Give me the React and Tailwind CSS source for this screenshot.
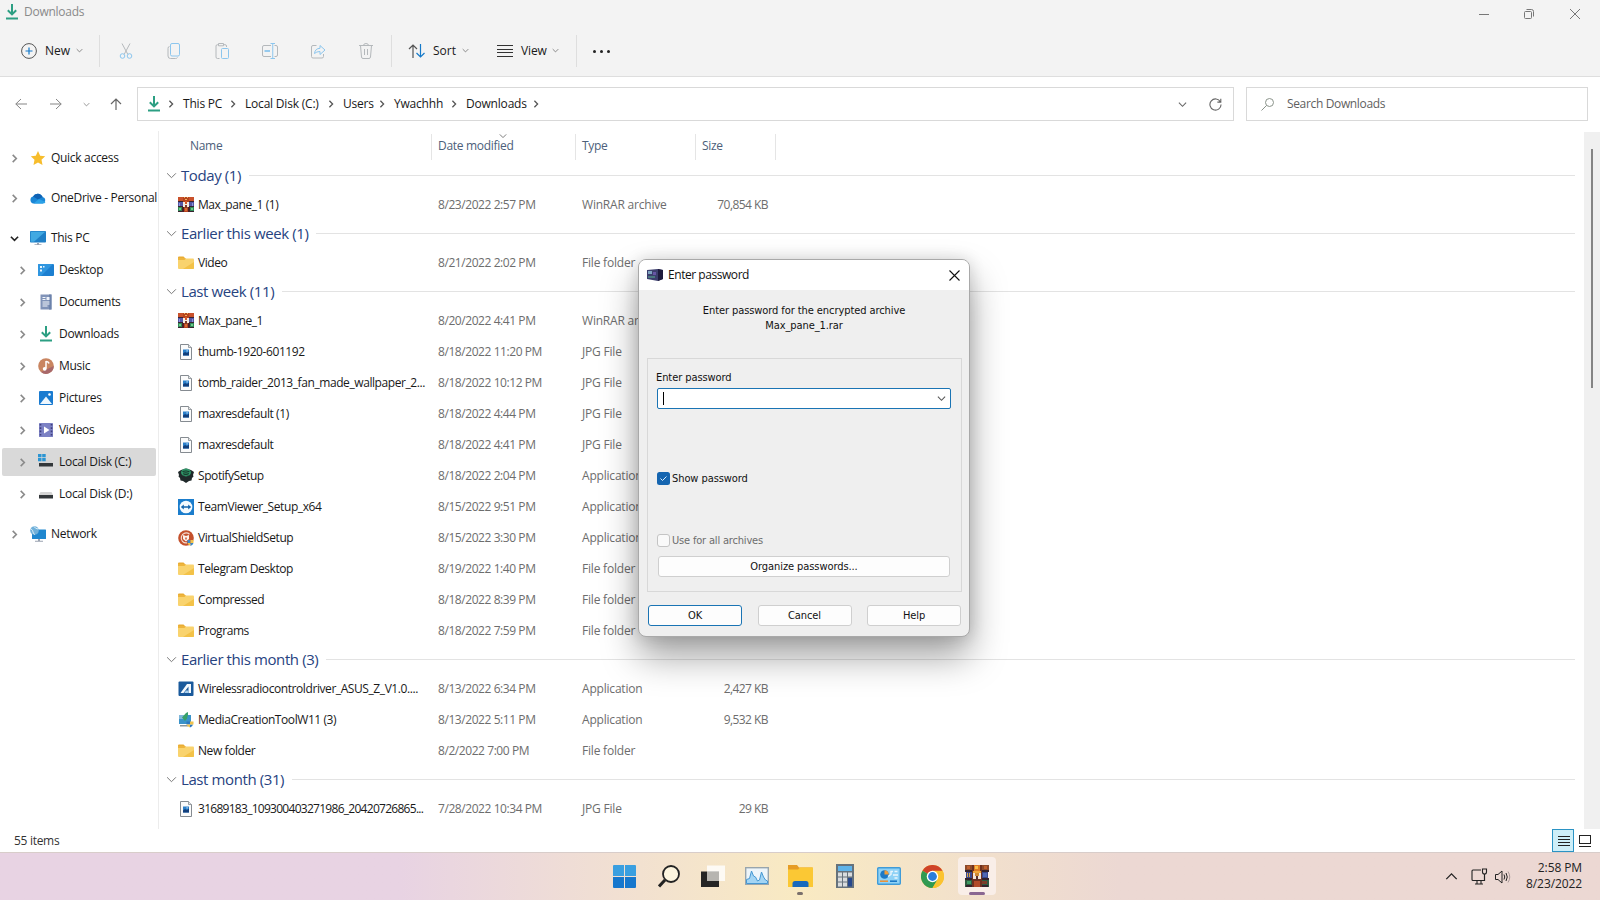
import React from 'react';

const Chevron = ({ dir = 'down', className = 'w-2 h-2 text-[#777]', width = 1.2 }) => {
  const paths = {
    down: 'M1 3l4 4 4-4',
    up: 'M1 7l4-4 4 4',
    right: 'M3 1l4 4-4 4',
  };
  return (
    <svg viewBox="0 0 10 10" className={`shrink-0 ${className}`} fill="none" stroke="currentColor" strokeWidth={width}>
      <path d={paths[dir]} />
    </svg>
  );
};

const DownloadIcon = ({ className = 'w-4 h-4' }) => (
  <svg viewBox="0 0 16 16" className={`shrink-0 ${className}`} fill="none" stroke="#2c9f83" strokeWidth="2">
    <path d="M8 0v10M3.800 6.200L8 10.400l4.200-4.200M2 14.600h12" />
  </svg>
);

const FolderIcon = () => (
  <svg viewBox="0 0 16 16" className="w-4 h-4">
    <path d="M0 2.500Q0 1.500 1 1.500h4.500L7.500 3.500H0z" fill="#e9ac33" />
    <path d="M0 3.500h15q1 0 1 1V13q0 1-1 1H1q-1 0-1-1z" fill="#f9d36e" />
    <path d="M16 7v6q0 1-1 1H5z" fill="#f3c248" />
    <path d="M0 3h6.500L8 3.500 6.500 5H0z" fill="#eeb53c" />
  </svg>
);

const RarIcon = () => (
  <svg viewBox="0 0 16 16" className="w-4 h-4" shapeRendering="crispEdges">
    <path d="M0 0h16v5H0z" fill="#c9512b" />
    <path d="M0 5h16v5H0z" fill="#5357a6" />
    <path d="M0 10h16v5H0z" fill="#2f8a56" />
    <path d="M0 4h16v1H0zM0 9h16v1H0zM0 14h16v1H0z" fill="#3a2230" />
    <path d="M1 6h1v3H1zM14 6h1v3h-1z" fill="#8d94d8" />
    <path d="M1 11h2v2H1zM13 11h2v2h-2z" fill="#6fc98b" />
    <path d="M5 0h6v15H5z" fill="#b4431f" />
    <path d="M6 0h1v1H6zM9 0h1v1H9zM7 2h2v1H7z" fill="#f3b35a" />
    <path d="M5 5h6v5H5z" fill="#f8ece0" />
    <path d="M7 4h2v3H7z" fill="#d4562b" />
    <path d="M7 8h2v3H7z" fill="#7d3a2a" />
    <path d="M4 10h2v5H4zM10 10h2v5h-2z" fill="#4a2026" />
    <path d="M7 11h2v3H7z" fill="#d96a35" />
  </svg>
);

const WinRarAppIcon = () => (
  <svg viewBox="0 0 24 24" className="w-6 h-6" shapeRendering="crispEdges">
    <path d="M0 1h24v6H0z" fill="#8d4a2a" />
    <path d="M1 7h22v8H1z" fill="#3a478c" />
    <path d="M0 15h24v8H0z" fill="#2f5b40" />
    <path d="M0 6h24v2H0zM0 14h24v2H0zM1 21h22v2H1z" fill="#33222c" />
    <path d="M2 2h3v3H2zM19 2h3v3h-3z" fill="#c0602f" />
    <path d="M2 9h1v4H2zM4 9h1v4H4z" fill="#d6a44a" />
    <path d="M18 9h4v4h-4z" fill="#4f68b4" />
    <path d="M2 17h4v3H2z" fill="#3f9a63" />
    <path d="M17 17h5v3h-5z" fill="#7c3d29" />
    <path d="M7 1h10v22H7z" fill="#6e3120" />
    <path d="M9 1h6v6H9z" fill="#dd7a26" />
    <path d="M10 2h3v3h-3z" fill="#f7bd4b" />
    <path d="M8 7h8v2H8z" fill="#f0a73c" />
    <path d="M8 9h8v6H8z" fill="#f3e5da" />
    <path d="M10 9h4v3h-4z" fill="#d08a35" />
    <path d="M11 12h2v4h-2z" fill="#5a2f2c" />
    <path d="M9 17h6v6H9z" fill="#b14b2a" />
  </svg>
);

const ImageFileIcon = () => (
  <svg viewBox="0 0 16 16" className="w-4 h-4">
    <path d="M2.500.5h8L13.500 3.500v12h-11z" fill="#fbfbfb" stroke="#858b91" />
    <path d="M10.500.5v3h3" fill="#e3e6e8" stroke="#858b91" strokeWidth=".8" />
    <path d="M5 5.500h6v6H5z" fill="#2b7fc9" />
    <path d="M5 11.500V9.500l2-1.500 2 1 2-1.500v4z" fill="#123f7c" />
    <path d="M8.500 6.200h1.200v1.200H8.500z" fill="#cfe8fb" />
  </svg>
);

const SpotifyIcon = () => (
  <svg viewBox="0 0 16 16" className="w-4 h-4">
    <path d="M0 4l3-2 5-1.500L13 2l3 2-1 3 .5 1.500L14 10l-.5 2.500-2.500.5-3 2-3-2-2.500-.5L2 10 .5 8.500 1 7z" fill="#20292a" />
    <ellipse cx="8" cy="4.500" rx="5" ry="3.900" fill="#2f9467" />
    <path d="M4.500 3.500q3.500-1.200 7 .2M5 5.200q3-.9 6 .2M5.500 6.800q2.500-.7 5 .2" fill="none" stroke="#16382b" />
  </svg>
);

const TeamViewerIcon = () => (
  <svg viewBox="0 0 16 16" className="w-4 h-4">
    <path d="M0 0h16v16H0z" fill="#1b7dcc" />
    <circle cx="8" cy="8" r="6.300" fill="#f5fafe" />
    <path d="M2.800 8l3-2.500v1.700h4.400V5.500l3 2.500-3 2.500V8.800H5.800v1.700z" fill="#1464ac" />
  </svg>
);

const ShieldSetupIcon = () => (
  <svg viewBox="0 0 16 16" className="w-4 h-4">
    <circle cx="8" cy="8" r="7.800" fill="#c4502b" />
    <path d="M11.500 4.200A5 5 0 1 0 9 12.900" fill="none" stroke="#f3d9cf" strokeWidth="1.200" />
    <path d="M5 5l3 1 3-1v4L8 11.500 5 9z" fill="#fbf1ec" />
    <path d="M7 7.500h2v1.500L8 10 7 9z" fill="#d97a5a" />
    <path d="M9.500 10h3v3h-3z" fill="#3a86c8" />
    <path d="M12.500 10h3v3h-3z" fill="#f0c24b" />
    <path d="M9.500 13h3v3q-2.500-.8-3-3z" fill="#f0c24b" />
    <path d="M12.500 13h3q-.5 2.200-3 3z" fill="#3a86c8" />
  </svg>
);

const AsusIcon = () => (
  <svg viewBox="0 0 16 16" className="w-4 h-4">
    <rect x=".5" y=".5" width="15" height="14.500" rx="1" fill="#1a5a9c" />
    <path d="M2.500 12L9 3h4v9h-2.500V5.500L5.500 12z" fill="#f4f9fd" />
    <path d="M8 9.500h2.500V12H6.200z" fill="#a8cfee" />
  </svg>
);

const MediaToolIcon = () => (
  <svg viewBox="0 0 16 16" className="w-4 h-4">
    <path d="M1 3h12v9H1z" fill="#3a93c9" />
    <path d="M1 3h5v4H1z" fill="#7fb7da" />
    <path d="M2 13h8v1.500H2z" fill="#8a979e" />
    <path d="M4 5.500L8 1l2-1v2.500l-1 4L7 9z" fill="#38a169" />
    <path d="M8.500 9.500h3.500v3H8.500zM12 12.500h3q-.4 2-3 3z" fill="#2d78c0" />
    <path d="M12 9.500h3.500v3H12zM8.500 12.500H12v3q-3-.8-3.500-3z" fill="#efc24a" />
  </svg>
);

const StarIcon = () => (
  <svg viewBox="0 0 16 16" className="w-4 h-4">
    <path d="M8 1l2.200 4.700 5 .6-3.700 3.500 1 5.200L8 12.400 3.500 15l1-5.200L.8 6.300l5-.6z" fill="#f7bd2c" />
  </svg>
);

const CloudIcon = () => (
  <svg viewBox="0 0 16 16" className="w-4 h-4">
    <path d="M3.500 13.500A3.600 3.600 0 0 1 3 6.500a5.300 5.300 0 0 1 9.600.4 3.400 3.400 0 0 1 .2 6.600z" fill="#1a86d6" />
    <path d="M3 6.500a5.300 5.300 0 0 1 9.600.4L8 9.500z" fill="#0f62b4" />
    <path d="M3.500 13.500L9 8.900l6.500 3q-.7 1.600-2.700 1.600z" fill="#2ba2e8" />
  </svg>
);

const MonitorIcon = () => (
  <svg viewBox="0 0 16 16" className="w-4 h-4">
    <path d="M7 13h2v1.500H7zM4.500 14.200h7v.9h-7z" fill="#9aa3b1" />
    <rect y="1" width="16" height="11.500" rx=".8" fill="#1f7fc6" />
    <path d="M.8 1.800h14.400L4 11.700H.8z" fill="#41a9e2" />
  </svg>
);

const DesktopIcon = () => (
  <svg viewBox="0 0 16 16" className="w-4 h-4">
    <rect y="2" width="16" height="12" rx="1" fill="#1c7fd0" />
    <path d="M1 2h14L3 14H1q-1 0-1-1V3q0-1 1-1z" fill="#2f96e0" />
    <path d="M2 4h2v2H2zM2 7.500h2v2H2zM5 4h1.500v1.500H5z" fill="#e9f5fd" />
  </svg>
);

const DocumentsIcon = () => (
  <svg viewBox="0 0 16 16" className="w-4 h-4">
    <path d="M2.500.5h11v15h-11z" fill="#8093b8" />
    <path d="M11 .5h2.500v15H11z" fill="#6c82ab" />
    <path d="M4.500 3.500h3M4.500 5.500h3M4.500 8h7M4.500 10h7M4.500 12h5" stroke="#f3f6fb" />
    <path d="M8.500 3h3v3h-3z" fill="#eef2fa" />
  </svg>
);

const MusicIcon = () => (
  <svg viewBox="0 0 16 16" className="w-4 h-4">
    <circle cx="8" cy="8" r="7.800" fill="#c98561" />
    <path d="M15.800 8A7.800 7.800 0 0 1 3 14z" fill="#a8686a" />
    <path d="M8 3v7.500M8 3.500q2.500 0 3 2" fill="none" stroke="#fff" strokeWidth="1.500" />
    <circle cx="6.700" cy="10.800" r="1.900" fill="#fff" />
  </svg>
);

const PicturesIcon = () => (
  <svg viewBox="0 0 16 16" className="w-4 h-4">
    <rect x="1" y="1" width="14" height="14" rx="1" fill="#1a7bd0" />
    <path d="M2 14l6-7.500L14 14z" fill="#eef7fe" />
    <circle cx="11.500" cy="4.500" r="1.300" fill="#fff" />
  </svg>
);

const VideosIcon = () => (
  <svg viewBox="0 0 16 16" className="w-4 h-4">
    <rect x="1" y="1" width="14" height="14" rx=".6" fill="#7c81c4" />
    <path d="M2.500 2v12M13.500 2v12" stroke="#3f3f7d" strokeWidth="1.600" strokeDasharray="1.600 1.700" />
    <path d="M6 4.500L11.500 8 6 11.500z" fill="#fff" />
  </svg>
);

const DiskIcon = ({ system }) => (
  <svg viewBox="0 0 16 16" className="w-4 h-4">
    <path d="M2.500 6h11L15 9H1z" fill="#d4d4d4" />
    <path d="M1 9h14v3.500H1z" fill="#33373a" />
    {system && <path d="M0 0h3.500v3.300H0zM4.200 0h3.500v3.300H4.200zM0 4h3.500v3.300H0zM4.200 4h3.500v3.300H4.200z" fill="#2b95d3" />}
  </svg>
);

const NetworkIcon = () => (
  <svg viewBox="0 0 16 16" className="w-4 h-4">
    <path d="M8 13h2v2H8zM5 14.800h8v.9H5z" fill="#9aa3b1" />
    <rect x="2" y="3.500" width="14" height="9.500" rx=".5" fill="#1f87cf" />
    <circle cx="4.500" cy="4.500" r="4.300" fill="#6fb0da" />
    <path d="M1 3q2 1 2 3t2 2.500M4 .5q1 2 4 2.500" fill="none" stroke="#d7ecf7" />
  </svg>
);

const ICONS = {
  rar: RarIcon,
  folder: FolderIcon,
  jpg: ImageFileIcon,
  spotify: SpotifyIcon,
  teamviewer: TeamViewerIcon,
  shield: ShieldSetupIcon,
  asus: AsusIcon,
  media: MediaToolIcon,
};

const sidebarItems = [
  { label: 'Quick access', icon: <StarIcon />, gap: 'mb-2' },
  { label: 'OneDrive - Personal', icon: <CloudIcon />, gap: 'mb-2' },
  { label: 'This PC', icon: <MonitorIcon />, open: true },
  { label: 'Desktop', icon: <DesktopIcon />, child: true },
  { label: 'Documents', icon: <DocumentsIcon />, child: true },
  { label: 'Downloads', icon: <DownloadIcon />, child: true },
  { label: 'Music', icon: <MusicIcon />, child: true },
  { label: 'Pictures', icon: <PicturesIcon />, child: true },
  { label: 'Videos', icon: <VideosIcon />, child: true },
  { label: 'Local Disk (C:)', icon: <DiskIcon system />, child: true, selected: true },
  { label: 'Local Disk (D:)', icon: <DiskIcon />, child: true, gap: 'mb-2' },
  { label: 'Network', icon: <NetworkIcon /> },
];

const groups = [
  {
    title: 'Today (1)',
    files: [{ name: 'Max_pane_1 (1)', icon: 'rar', date: '8/23/2022 2:57 PM', type: 'WinRAR archive', size: '70,854 KB' }],
  },
  {
    title: 'Earlier this week (1)',
    files: [{ name: 'Video', icon: 'folder', date: '8/21/2022 2:02 PM', type: 'File folder' }],
  },
  {
    title: 'Last week (11)',
    files: [
      { name: 'Max_pane_1', icon: 'rar', date: '8/20/2022 4:41 PM', type: 'WinRAR archive' },
      { name: 'thumb-1920-601192', icon: 'jpg', date: '8/18/2022 11:20 PM', type: 'JPG File' },
      { name: 'tomb_raider_2013_fan_made_wallpaper_2...', icon: 'jpg', date: '8/18/2022 10:12 PM', type: 'JPG File' },
      { name: 'maxresdefault (1)', icon: 'jpg', date: '8/18/2022 4:44 PM', type: 'JPG File' },
      { name: 'maxresdefault', icon: 'jpg', date: '8/18/2022 4:41 PM', type: 'JPG File' },
      { name: 'SpotifySetup', icon: 'spotify', date: '8/18/2022 2:04 PM', type: 'Application' },
      { name: 'TeamViewer_Setup_x64', icon: 'teamviewer', date: '8/15/2022 9:51 PM', type: 'Application' },
      { name: 'VirtualShieldSetup', icon: 'shield', date: '8/15/2022 3:30 PM', type: 'Application' },
      { name: 'Telegram Desktop', icon: 'folder', date: '8/19/2022 1:40 PM', type: 'File folder' },
      { name: 'Compressed', icon: 'folder', date: '8/18/2022 8:39 PM', type: 'File folder' },
      { name: 'Programs', icon: 'folder', date: '8/18/2022 7:59 PM', type: 'File folder' },
    ],
  },
  {
    title: 'Earlier this month (3)',
    files: [
      { name: 'Wirelessradiocontroldriver_ASUS_Z_V1.0....', icon: 'asus', date: '8/13/2022 6:34 PM', type: 'Application', size: '2,427 KB' },
      { name: 'MediaCreationToolW11 (3)', icon: 'media', date: '8/13/2022 5:11 PM', type: 'Application', size: '9,532 KB' },
      { name: 'New folder', icon: 'folder', date: '8/2/2022 7:00 PM', type: 'File folder' },
    ],
  },
  {
    title: 'Last month (31)',
    files: [
      {
        name: '31689183_109300403271986_20420726865...',
        icon: 'jpg',
        date: '7/28/2022 10:34 PM',
        type: 'JPG File',
        size: '29 KB',
        tracking: 'tracking-[-0.72px]',
      },
    ],
  },
];

const crumbs = [
  { label: 'This PC', width: 'w-[62px]' },
  { label: 'Local Disk (C:)', width: 'w-[98px]' },
  { label: 'Users', width: 'w-[51px]' },
  { label: 'Ywachhh', width: 'w-[72px]' },
  { label: 'Downloads', width: 'w-[82px]' },
];

const TitleBar = () => (
  <div className="flex h-6 items-center pl-1">
    <DownloadIcon className="w-4 h-4" />
    <span className="ml-1 flex-1 tracking-[-0.25px] text-[#8a8a8a]">Downloads</span>
    <div className="flex items-center pr-5 pt-1 text-[#777]">
      <svg viewBox="0 0 10 10" className="w-[10px] h-[10px]" fill="none" stroke="currentColor">
        <path d="M0 5.500h10" />
      </svg>
      <svg viewBox="0 0 10 10" className="ml-[35px] w-[10px] h-[10px]" fill="none" stroke="currentColor">
        <rect x=".5" y="2.500" width="7" height="7" rx="1" />
        <path d="M2.500.5h5q2 0 2 2v5" />
      </svg>
      <svg viewBox="0 0 10 10" className="ml-9 w-[10px] h-[10px]" fill="none" stroke="currentColor">
        <path d="M0 0l10 10M10 0L0 10" />
      </svg>
    </div>
  </div>
);

const Divider = () => <div className="h-8 w-px bg-[#dedede]" />;

const ToolIcon = ({ children }) => (
  <svg viewBox="0 0 16 16" className="w-4 h-4 shrink-0" fill="none" stroke="#b4b8bb">
    {children}
  </svg>
);

const Toolbar = () => (
  <div className="flex h-[53px] items-center border-b border-[#dedede] pl-[21px] pt-px">
    <svg viewBox="0 0 16 16" className="w-4 h-4" fill="none">
      <circle cx="8" cy="8" r="7.400" stroke="#555" />
      <path d="M8 4.500v7M4.500 8h7" stroke="#1479c9" strokeWidth="1.200" />
    </svg>
    <span className="ml-2 w-[31px]">New</span>
    <Chevron className="w-[7px] h-[7px] text-[#777]" />
    <div className="ml-4">
      <Divider />
    </div>
    <div className="ml-[18px] mr-[17px] flex gap-8">
      <ToolIcon>
        <path d="M4 .5l5.800 10.800M12 .5L6.200 11.300" />
        <circle cx="4.500" cy="13" r="2.300" stroke="#8cc6ee" />
        <circle cx="11.500" cy="13" r="2.300" stroke="#8cc6ee" />
      </ToolIcon>
      <ToolIcon>
        <path d="M3.500 3.500q-1.500 0-1.500 2v7.500q0 2.500 2.500 2.500h5q1.500 0 2-1" />
        <rect x="4.500" y=".5" width="9" height="12.500" rx="1.500" stroke="#8cc6ee" />
      </ToolIcon>
      <ToolIcon>
        <path d="M5.500 15.500h-2q-1.500 0-1.500-1.500V3q0-1.300 1.500-1.300H5M9 1.700h2q1.500 0 1.500 1.300v1M4.500.5h5v2.300h-5z" />
        <rect x="7.500" y="5.500" width="7" height="10" rx="1" stroke="#8cc6ee" />
      </ToolIcon>
      <ToolIcon>
        <path d="M9 2.500H2q-1.500 0-1.500 1.500v8q0 1.500 1.500 1.500h7M12.500 2.500h1.500q1.500 0 1.500 1.500v8q0 1.500-1.500 1.500h-1.500" />
        <path d="M8.500.5h4.500M10.750.5v15M8.500 15.500h4.500" stroke="#8cc6ee" />
        <path d="M2.500 8h5.500" stroke="#8cc6ee" strokeWidth="1.800" />
      </ToolIcon>
      <ToolIcon>
        <path d="M6.500 2.500H3Q1.500 2.500 1.500 4v9.500Q1.500 15 3 15h9q1.500 0 1.500-1.500V11" />
        <path d="M4.500 10.500q.5-5 5.500-5.200V2.500l5 4.500-5 4.500V8.500q-3.500 0-5.500 2z" stroke="#8cc6ee" />
      </ToolIcon>
      <ToolIcon>
        <path d="M1 2.500h14M5.500 2.500q0-2 2.500-2t2.500 2M2.500 2.500l1 11.500q.2 1.500 1.500 1.500h6q1.300 0 1.500-1.500l1-11.500M6.500 6v6M9.500 6v6" />
      </ToolIcon>
    </div>
    <Divider />
    <svg viewBox="0 0 18 16" className="ml-4 w-[18px] h-4" fill="none">
      <path d="M5 15V2M1 6l4-4 4 4" stroke="#555" strokeWidth="1.200" />
      <path d="M12.500 1v13M8.500 10l4 4 4-4" stroke="#1479c9" strokeWidth="1.200" />
    </svg>
    <span className="ml-[7px] w-[29px]">Sort</span>
    <Chevron className="w-[7px] h-[7px] text-[#777]" />
    <svg viewBox="0 0 16 12" className="ml-[28px] w-4 h-3" fill="none" stroke="#333" shapeRendering="crispEdges">
      <path d="M0 .5h16M0 4.500h16M0 7.500h16M0 11.500h16" />
    </svg>
    <span className="ml-2 w-[31px] tracking-[-0.1px]">View</span>
    <Chevron className="w-[7px] h-[7px] text-[#777]" />
    <div className="ml-[17px]">
      <Divider />
    </div>
    <div className="ml-4 mt-[2px] flex gap-1">
      <div className="w-[3px] h-[3px] rounded-full bg-[#222]" />
      <div className="w-[3px] h-[3px] rounded-full bg-[#222]" />
      <div className="w-[3px] h-[3px] rounded-full bg-[#222]" />
    </div>
  </div>
);

const AddressRow = () => (
  <div className="flex h-[54px] items-center pr-3">
    <svg viewBox="0 0 12 12" className="ml-[15px] w-3 h-3" fill="none" stroke="#858585">
      <path d="M12 6H.8M6 1L.8 6 6 11" />
    </svg>
    <svg viewBox="0 0 12 12" className="ml-[23px] w-3 h-3" fill="none" stroke="#858585">
      <path d="M0 6h11.200M6 1l5.200 5L6 11" />
    </svg>
    <Chevron className="ml-[21px] w-[7px] h-[7px] text-[#858585]" />
    <svg viewBox="0 0 12 12" className="ml-5 w-3 h-3" fill="none" stroke="#666" strokeWidth="1.200">
      <path d="M6 12V1M1 6l5-5 5 5" />
    </svg>
    <div className="ml-[15px] flex h-[34px] w-[1097px] items-center border border-[#d9d9d9]">
      <DownloadIcon className="ml-2 w-4 h-4" />
      <Chevron dir="right" className="ml-[5px] w-2 h-2 text-[#555]" width={1.6} />
      <div className="ml-2 flex tracking-[-0.2px]">
        {crumbs.map((crumb) => (
          <div key={crumb.label} className={`flex items-center ${crumb.width}`}>
            <span className="flex-1 whitespace-nowrap">{crumb.label}</span>
            <Chevron dir="right" className="mr-2 w-2 h-2 text-[#555]" width={1.6} />
          </div>
        ))}
      </div>
      <Chevron className="ml-auto w-[9px] h-[9px] text-[#666]" />
      <svg viewBox="0 0 14 14" className="ml-[22px] mr-[11px] w-[13px] h-[13px]" fill="none" stroke="#666" strokeWidth="1.200">
        <path d="M12.300 4.200A6 6 0 1 0 13 7M12.700.8v3.700H9" />
      </svg>
    </div>
    <div className="ml-3 flex h-[34px] flex-1 items-center border border-[#d9d9d9]">
      <svg viewBox="0 0 13 13" className="ml-[14px] w-[13px] h-[13px]" fill="none" stroke="#8a938a">
        <circle cx="8.500" cy="4.500" r="4" />
        <path d="M5.600 7.400L.5 12.500" />
      </svg>
      <span className="ml-[13px] tracking-[-0.35px] text-[#5f5f5f]">Search Downloads</span>
    </div>
  </div>
);

const Sidebar = () => (
  <div className="w-[159px] shrink-0 border-r border-[#ececec] pt-[11px] tracking-[-0.3px]">
    {sidebarItems.map((item) => (
      <div key={item.label} className={`flex h-8 items-center pl-[2px] pr-[2px] ${item.gap || ''}`}>
        <div className={`flex h-7 w-full items-center rounded-xs ${item.child ? 'pl-4' : 'pl-2'} ${item.selected ? 'bg-[#d9d9d9]' : ''}`}>
          <Chevron
            dir={item.open ? 'down' : 'right'}
            className={`w-[9px] h-[9px] ${item.open ? 'text-[#222]' : 'text-[#8a8a8a]'}`}
            width={1.8}
          />
          <div className="ml-[11px] shrink-0">{item.icon}</div>
          <span className="ml-[5px] whitespace-nowrap">{item.label}</span>
        </div>
      </div>
    ))}
  </div>
);

const ListHeader = () => (
  <div className="relative flex h-[29px] items-center pb-px tracking-[-0.3px] text-[#4c607a]">
    <span className="w-[272px] pb-[2px] pl-[31px]">Name</span>
    <span className="flex h-[26px] w-36 items-center border-l border-[#e5e5e5] pb-[2px] pl-[6px]">Date modified</span>
    <span className="flex h-[26px] w-[120px] items-center border-l border-[#e5e5e5] pb-[2px] pl-[6px]">Type</span>
    <span className="flex h-[26px] w-[81px] items-center border-x border-[#e5e5e5] pb-[2px] pl-[6px]">Size</span>
    <Chevron className="absolute left-[340px] -top-px w-2 h-2 text-[#777]" />
  </div>
);

const FileRow = ({ file }) => {
  const Icon = ICONS[file.icon];
  return (
    <div className="flex h-[31px] items-center text-[#6d6d6d]">
      <div className="ml-[19px] w-4">
        <Icon />
      </div>
      <span className={`ml-1 w-[240px] whitespace-nowrap text-[#191919] ${file.tracking || 'tracking-[-0.42px]'}`}>{file.name}</span>
      <span className="w-36 whitespace-nowrap tracking-[-0.43px]">{file.date}</span>
      <span className="w-[100px] whitespace-nowrap tracking-[-0.2px]">{file.type}</span>
      <span className="w-[86px] whitespace-nowrap text-right tracking-[-0.55px]">{file.size}</span>
    </div>
  );
};

const FileList = () => (
  <div className="flex-1 pt-[2px]">
    <ListHeader />
    {groups.map((group) => (
      <div key={group.title}>
        <div className="flex h-[27px] items-center pl-[7px] pr-[9px]">
          <Chevron className="w-[11px] h-[11px] text-[#777]" width={0.9} />
          <span className="ml-1 pb-[2px] text-[15px] tracking-[-0.4px] text-[#27437f]">{group.title}</span>
          <div className="ml-2 h-px flex-1 bg-[#e3e3e3]" />
        </div>
        {group.files.map((file) => (
          <FileRow key={file.name} file={file} />
        ))}
      </div>
    ))}
  </div>
);

const StatusBar = () => (
  <div className="flex h-[23px] items-center pl-[14px] pr-[9px] text-[#333]">
    <span className="flex-1 tracking-[-0.3px]">55 items</span>
    <div className="flex h-[23px] w-[22px] items-center justify-center border border-[#2b93c4] bg-[#cdeef8] pl-px">
      <svg viewBox="0 0 12 10" className="w-3 h-[10px]" stroke="#222" shapeRendering="crispEdges">
        <path d="M0 .5h12M0 3.500h12M0 6.500h12M0 9.500h12" />
      </svg>
    </div>
    <svg viewBox="0 0 12 12" className="ml-[5px] w-3 h-3" fill="none" stroke="#222" shapeRendering="crispEdges">
      <path d="M.5.5h11v8H.5zM0 11.500h12" />
    </svg>
  </div>
);

const DialogButton = ({ children, primary, className = 'w-[94px]' }) => (
  <button
    className={`h-[21px] rounded-[3px] border bg-[#fdfdfd] leading-[19px] ${primary ? 'border-[#1a74b4]' : 'border-[#cfcfcf]'} ${className}`}
  >
    {children}
  </button>
);

const PasswordDialog = () => (
  <div className="absolute left-[638px] top-[259px] flex h-[378px] w-[332px] flex-col overflow-hidden rounded-lg border border-[#a9a9a9] bg-[#efefef] font-['DejaVu_Sans_Condensed','Noto_Sans',sans-serif] text-[11px] tracking-[-0.08px] text-[#111] shadow-[0_20px_36px_rgba(0,0,0,0.36),0_0_16px_rgba(0,0,0,0.14)]">
    <div className="flex h-[30px] shrink-0 items-center bg-white pl-2 pr-[9px] font-['Open_Sans','Noto_Sans',sans-serif] text-xs">
      <svg viewBox="0 0 16 12" className="w-4 h-3">
        <path d="M0 1l11-1 5 1v9l-5 2L0 10z" fill="#3d3f6e" />
        <path d="M11 0l5 1v9l-5 2z" fill="#1e1b3d" />
        <path d="M1 2h4v3H1z" fill="#7fa3c0" />
        <path d="M6 3h3v3H6z" fill="#6756a5" />
        <path d="M1 7h7v2H1z" fill="#4b7a80" />
      </svg>
      <span className="ml-[5px] flex-1 tracking-[-0.45px]">Enter password</span>
      <svg viewBox="0 0 11 11" className="w-[11px] h-[11px]" fill="none" stroke="#111" strokeWidth="1.100">
        <path d="M.5.5l10 10M10.500.5l-10 10" />
      </svg>
    </div>
    <p className="mt-[13px] h-[55px] shrink-0 text-center leading-[15px]">
      Enter password for the encrypted archive
      <br />
      Max_pane_1.rar
    </p>
    <div className="ml-2 mr-[7px] flex h-[234px] shrink-0 flex-col border border-[#d8d8d8] pl-[9px] pt-3">
      <span className="-ml-px leading-[14px]">Enter password</span>
      <div className="mt-[3px] flex h-[21px] w-[294px] items-center rounded-xs border border-[#1a74b4] bg-white pl-[5px] pr-1">
        <div className="h-[13px] w-px bg-black" />
        <Chevron className="ml-auto w-[9px] h-[9px] text-[#555]" />
      </div>
      <div className="mt-[63px] flex h-[13px] items-center">
        <svg viewBox="0 0 13 13" className="w-[13px] h-[13px]" fill="none">
          <rect width="13" height="13" rx="2.500" fill="#1565b0" />
          <path d="M3.500 6.500l2 2 4-4" stroke="#dbeefc" />
        </svg>
        <span className="ml-[2px] pt-[2px]">Show password</span>
      </div>
      <div className="mt-[49px] flex h-[13px] items-center text-[#6d6d6d]">
        <div className="h-[13px] w-[13px] rounded-[3px] border border-[#c4c4c4] bg-[#f9f9f9]" />
        <span className="ml-[2px] pt-[2px] tracking-[-0.18px]">Use for all archives</span>
      </div>
      <DialogButton className="ml-px mt-[9px] w-[292px]">Organize passwords...</DialogButton>
    </div>
    <div className="mt-[13px] flex justify-between pl-[9px] pr-2">
      <DialogButton primary>OK</DialogButton>
      <DialogButton>Cancel</DialogButton>
      <DialogButton>Help</DialogButton>
    </div>
  </div>
);

const Taskbar = () => (
  <div className="relative flex h-12 items-center border-t border-[#d8cdca] bg-linear-to-r from-[#e8d3e3] from-25% via-[#f9eac2] via-50% to-[#ecd8d3] to-70%">
    <div className="flex items-center pb-px pl-[613px]">
      <svg viewBox="0 0 23 23" className="w-[23px] h-[23px]">
        <path d="M1 0h10v11H0V1q0-1 1-1zM12 0h10q1 0 1 1v10H12z" fill="#3a9fe0" />
        <path d="M0 12h11v11H1q-1 0-1-1zM12 12h11v10q0 1-1 1H12z" fill="#1677cd" />
      </svg>
      <svg viewBox="0 0 22 23" className="ml-[22px] w-[22px] h-[23px]" fill="none" stroke="#222">
        <circle cx="13" cy="9" r="8" fill="#fdf5df" strokeWidth="1.800" />
        <path d="M7 15L1 21.500" strokeWidth="3" />
      </svg>
      <svg viewBox="0 0 24 23" className="ml-[21px] w-6 h-[23px]">
        <path d="M0 6.500h18V22H0z" fill="#252525" />
        <path d="M6 .5h18v15.500H6z" fill="#fff" fillOpacity=".8" />
        <path d="M6 6.500h12V16H6z" fill="#b7b5b0" />
      </svg>
      <svg viewBox="0 0 24 18" className="ml-5 w-6 h-[18px]">
        <rect x=".7" y=".7" width="22.600" height="16.600" fill="#edf5fa" stroke="#98a5ad" strokeWidth="1.400" />
        <path d="M1.500 16.500v-4l3-1L6.500 4l2 5 2 1 2 4 2-1L16.500 5l2 5 2 3 2 1v2.500z" fill="#a3d5f4" stroke="#4598d3" />
      </svg>
      <div className="relative ml-[19px]">
        <svg viewBox="0 0 25 22" className="w-[25px] h-[22px]">
          <path d="M0 0h9l2 2.500h13.500V11H0z" fill="#e69c25" />
          <path d="M0 4.500h10l2-2h13V22H0z" fill="#fbc834" />
          <path d="M4.500 22v-3.500q0-2.500 2.500-2.500h11q2.500 0 2.500 2.500V22z" fill="#1769bd" />
        </svg>
        <div className="absolute -bottom-2 left-[9px] h-[3px] w-[6px] rounded-full bg-[#7a706c]" />
      </div>
      <svg viewBox="0 0 18 24" className="ml-[23px] w-[18px] h-6">
        <path d="M0 0h18v24H0z" fill="#66727c" />
        <path d="M2 2h14v5H2z" fill="#5fb4ea" />
        <path d="M2 8.500h4v4H2zM7 8.500h4v4H7zM12 8.500h4v4h-4zM2 13.500h4v4H2zM7 13.500h4v4H7zM2 18.500h4v4H2zM7 18.500h4v4H7z" fill="#d9dcde" />
        <path d="M12 14h4v8.500h-4z" fill="#27488c" />
      </svg>
      <svg viewBox="0 0 24 18" className="ml-[23px] w-6 h-[18px]">
        <rect x=".7" y=".7" width="22.600" height="16.600" rx="1" fill="#8fd2f6" stroke="#3f9bd8" strokeWidth="1.400" />
        <circle cx="7.500" cy="7.500" r="4.300" fill="#1b78c5" />
        <path d="M7.500 7.500V3.200a4.300 4.300 0 0 1 4.300 4.300z" fill="#f19b36" />
        <path d="M11 9.500l3-2V4.500h2M17.500 4.500h3M16 8h5M17.500 11h3" fill="none" stroke="#eaf6fd" strokeWidth="1.400" />
        <path d="M3 14.200h8" stroke="#e8923b" strokeWidth="1.600" />
        <path d="M13 14.200h7" stroke="#1b78c5" strokeWidth="1.600" />
      </svg>
      <svg viewBox="0 0 24 24" className="ml-5 w-[23px] h-[23px]">
        <circle cx="12" cy="12" r="12" fill="#fbc32f" />
        <path d="M12 12L1.600 6A12 12 0 0 1 22.400 6z" fill="#cf4329" />
        <path d="M12 12L1.600 6A12 12 0 0 0 12 24l5.500-9z" fill="#309a52" />
        <path d="M12 6h10.400A12 12 0 0 1 12 24l5.200-9z" fill="#fbc32f" />
        <circle cx="12" cy="12" r="6" fill="#fff" />
        <circle cx="12" cy="12" r="4.600" fill="#2a7edb" />
      </svg>
      <div className="relative ml-[14px] flex h-[38px] w-[38px] items-center justify-center rounded bg-[#f9eee8]">
        <WinRarAppIcon />
        <div className="absolute bottom-0 h-[3px] w-4 rounded-full bg-[#8a6791]" />
      </div>
    </div>
    <div className="ml-auto flex items-center pr-[18px] text-[#222]">
      <Chevron dir="up" className="w-[13px] h-[13px] text-[#222]" width={1} />
      <svg viewBox="0 0 17 17" className="ml-[13px] w-[17px] h-[17px]" fill="none" stroke="#222" strokeWidth="1.100">
        <path d="M10 2H2Q1 2 1 3v8.500q0 1 1 1h11.500V8M4 16h8M6 12.500V16M10 12.500V16" />
        <path d="M11.500 1h4v3q0 2-2 2t-2-2zM13.500 6v7" />
      </svg>
      <svg viewBox="0 0 16 14" className="ml-[7px] w-4 h-[14px]" fill="none" stroke="#222">
        <path d="M.5 4.500H3L7 1v12L3 9.500H.5z" />
        <path d="M9 4.500q1.500 2.500 0 5M11 3q2.500 4 0 8" />
        <path d="M13 1.500q3.500 5.500 0 11" stroke="#a99" />
      </svg>
      <div className="ml-[15px] pb-[2px] text-right leading-4 tracking-[-0.1px]">
        <div>2:58 PM</div>
        <div>8/23/2022</div>
      </div>
    </div>
  </div>
);

const App = () => {
  return (
    <div className="relative flex h-[900px] w-[1600px] flex-col overflow-hidden bg-white font-['Open_Sans','Noto_Sans',sans-serif] text-xs text-[#191919]">
      <div className="bg-[#f3f3f3]">
        <TitleBar />
        <Toolbar />
      </div>
      <AddressRow />
      <div className="flex h-[698px] shrink-0 overflow-hidden">
        <Sidebar />
        <FileList />
        <div className="mt-px w-4 bg-[#f0f0f0] pl-[7px] pt-[17px]">
          <div className="h-[239px] w-[2px] bg-[#858585]" />
        </div>
      </div>
      <StatusBar />
      <Taskbar />
      <PasswordDialog />
    </div>
  );
};

export default App;
